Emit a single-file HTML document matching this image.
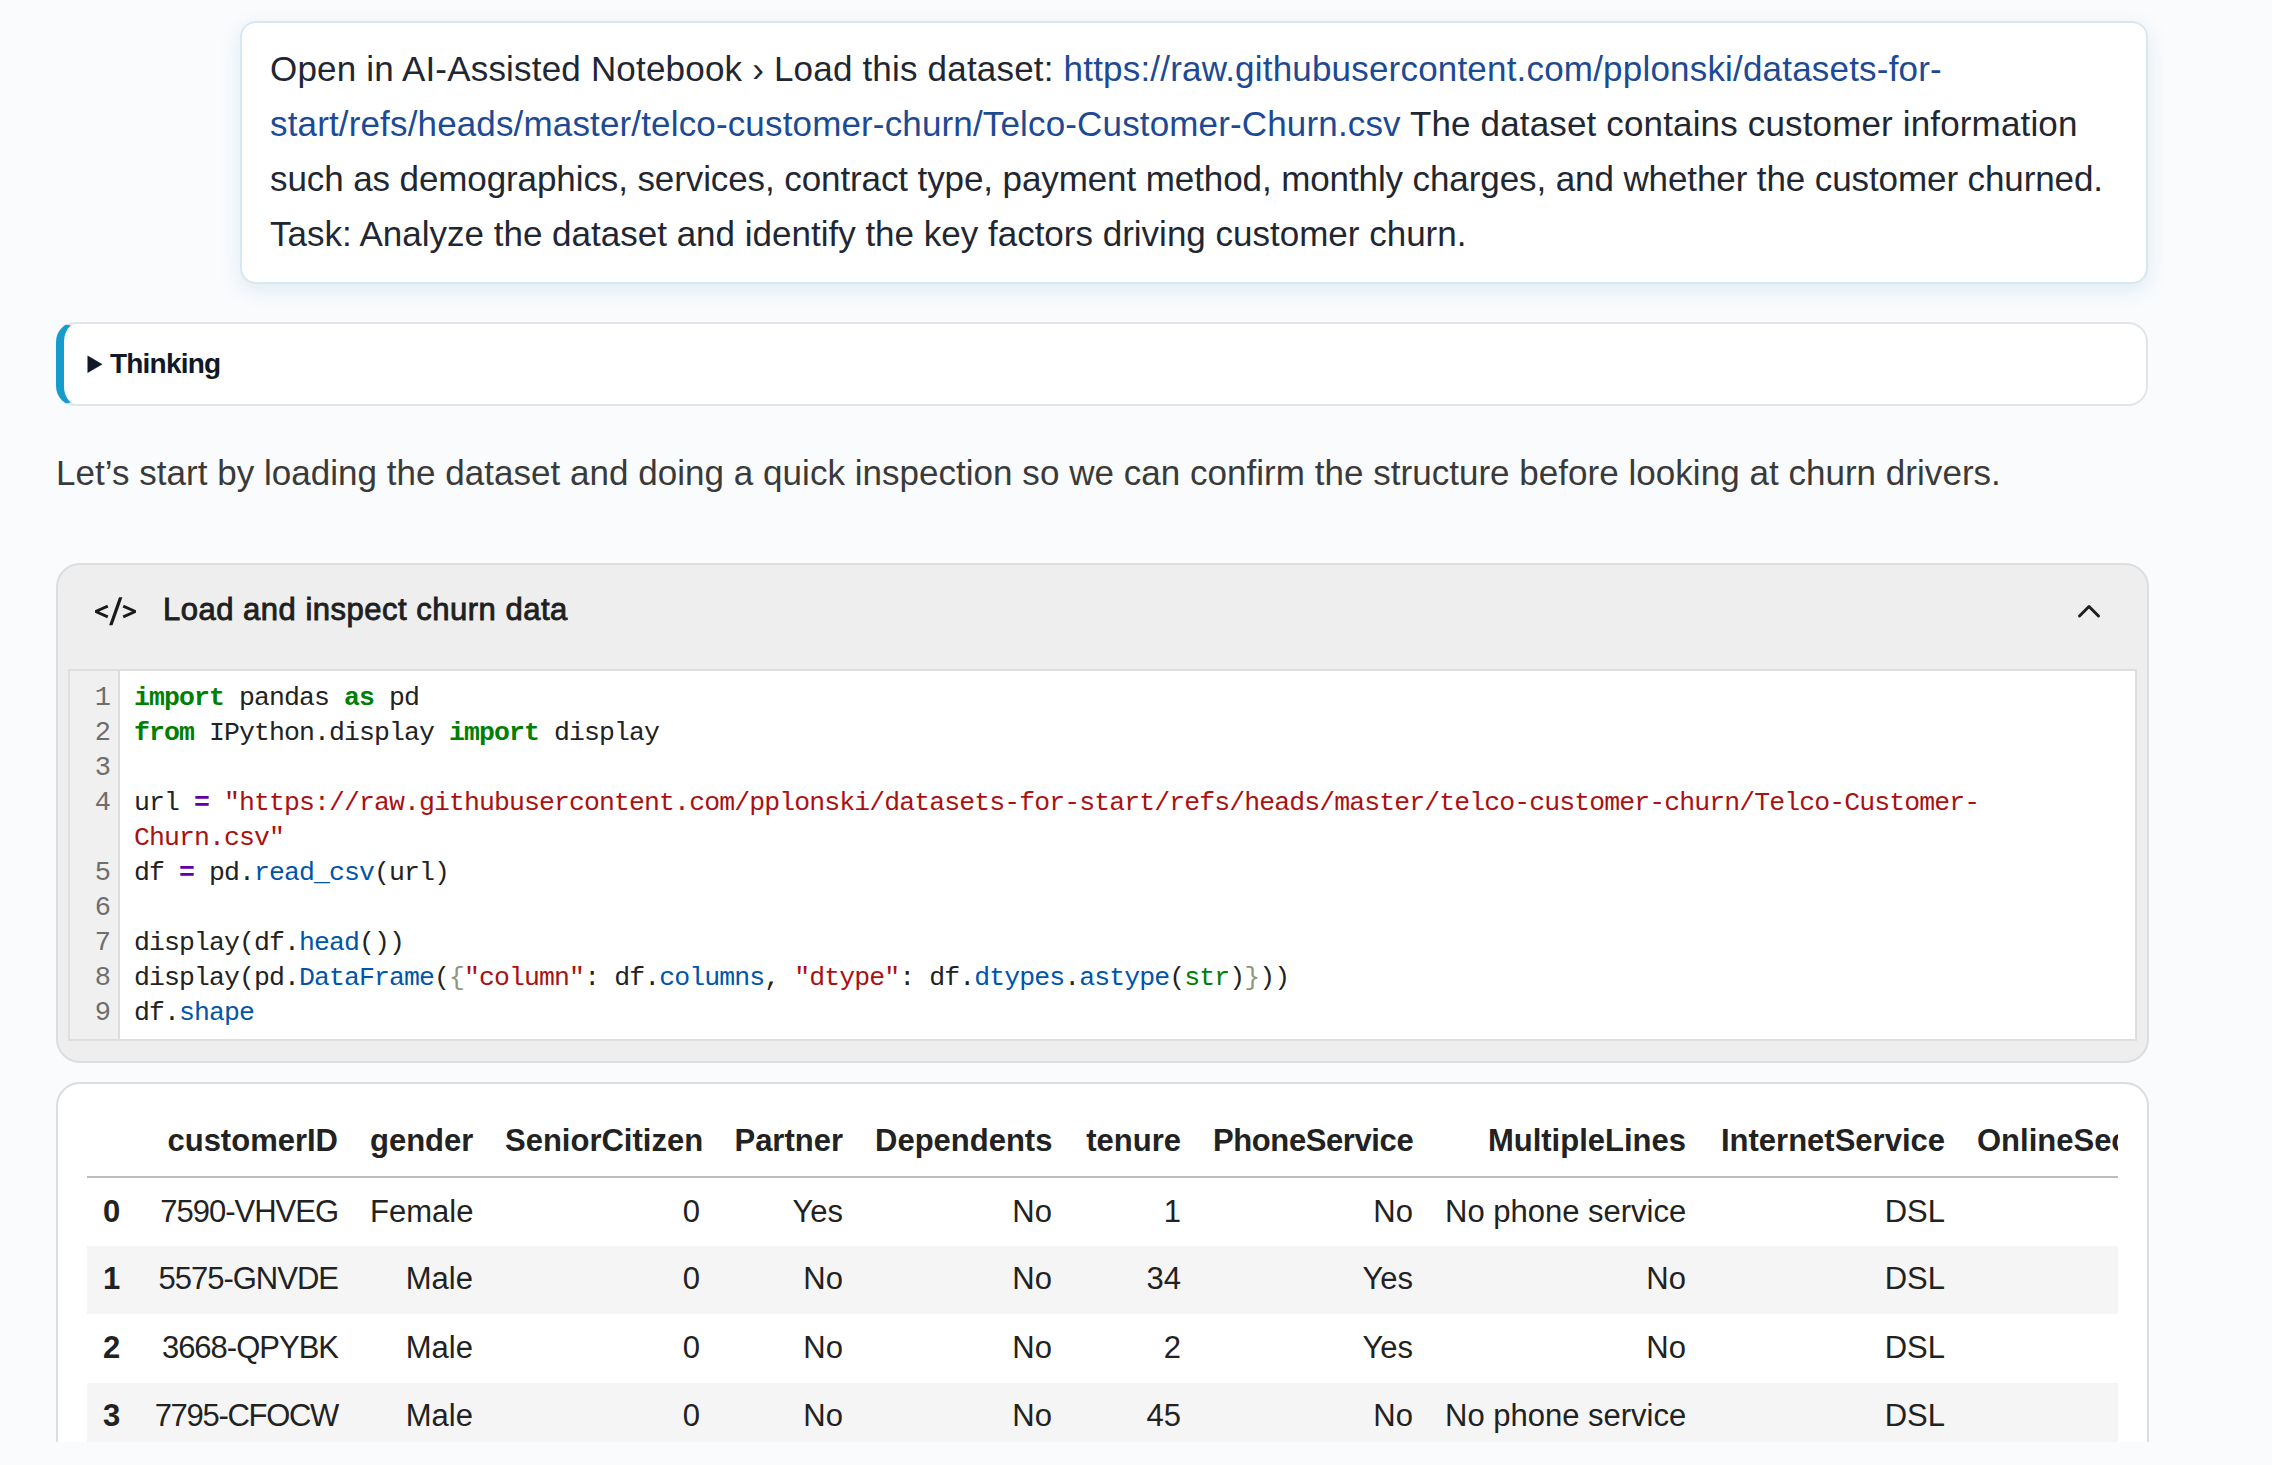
<!DOCTYPE html>
<html><head><meta charset="utf-8">
<style>
*{box-sizing:border-box;margin:0;padding:0}
html,body{width:2272px;height:1465px;overflow:hidden;background:#f9fbfd;font-family:"Liberation Sans",sans-serif;}
.abs{position:absolute}
.nw{white-space:nowrap}
#prompt{left:240px;top:21px;width:1908px;height:263px;background:#fff;border:2px solid #d8e8f2;border-radius:16px;box-shadow:0 6px 18px rgba(150,190,215,.25);}
.pl{position:absolute;left:28px;font-size:35px;line-height:55px;height:55px;color:#1f2733;white-space:nowrap}
.lk{color:#1d4a94}
#think{left:56px;top:322px;width:2092px;height:84px;background:#fff;border:2px solid #e2e4e8;border-left:8px solid #159ccc;border-radius:20px;}
#think .t{position:absolute;left:46px;top:0;font-size:28px;line-height:80px;font-weight:bold;letter-spacing:-0.8px;color:#111827;white-space:nowrap}
#para{left:56px;font-size:35px;line-height:55px;color:#3a3a3a;letter-spacing:0.03px;white-space:nowrap}
#cell{left:56px;top:563px;width:2093px;height:500px;background:#eeeeee;border:2px solid #dcdddf;border-radius:24px;}
#cell .ic{position:absolute;left:37px;top:28px;font-size:31px;color:#1f1f1f;white-space:nowrap}
#cell .ti{position:absolute;left:105px;top:27px;font-size:31px;letter-spacing:0.5px;-webkit-text-stroke:0.9px #1f1f1f;color:#1f1f1f;white-space:nowrap}
#code{left:68px;top:669px;width:2069px;height:372px;background:#fff;border:2px solid #dedede;}
#gut{position:absolute;left:0;top:0;width:50px;height:100%;background:#f0f0f0;border-right:2px solid #dedede}
.cl{position:absolute;left:64px;margin-top:-1px;font-family:"Liberation Mono",monospace;font-size:26.5px;letter-spacing:-0.9px;line-height:35px;height:35px;white-space:pre;color:#222}
.nm{position:absolute;left:0;width:41px;margin-top:-1px;text-align:right;font-family:"Liberation Mono",monospace;font-size:27px;line-height:35px;color:#6e6e6e}
.k{color:#008000;font-weight:bold}
.o{color:#6200a8;font-weight:bold}
.s{color:#aa1111}
.p{color:#0055aa}
.b{color:#008000}
.br{color:#8e9680}
#tcard{left:56px;top:1082px;width:2093px;height:500px;background:#fff;border:2px solid #dcdddf;border-radius:24px;overflow:hidden}
#twrap{position:absolute;left:29px;top:0;width:2031px;overflow:hidden}
table{border-collapse:collapse;table-layout:fixed;font-size:31px;color:#222}
td,th{text-align:right;white-space:nowrap;overflow:hidden;padding:0 16px}
thead th{height:93px;vertical-align:bottom;padding-bottom:17px;border-bottom:2px solid #bdbdbd;font-weight:bold}
tbody td,tbody th{height:68px;padding-bottom:2px}
tbody tr:nth-child(1) td,tbody tr:nth-child(1) th,tbody tr:nth-child(3) td,tbody tr:nth-child(3) th{height:69px}
tbody tr:nth-child(1) td,tbody tr:nth-child(1) th{padding-bottom:1px}
tbody th{font-weight:bold}
td.id{letter-spacing:-1px}
tbody tr:nth-child(even){background:#f5f5f5}
#clip{left:0;top:1442px;width:2272px;height:23px;background:#f9fbfd}
</style></head><body>
<div id="prompt" class="abs">
 <div class="pl" style="top:18px;letter-spacing:0.19px">Open in AI-Assisted Notebook › Load this dataset: <span class="lk">https://raw.githubusercontent.com/pplonski/datasets-for-</span></div>
 <div class="pl" style="top:73px;letter-spacing:0.15px"><span class="lk">start/refs/heads/master/telco-customer-churn/Telco-Customer-Churn.csv</span> The dataset contains customer information</div>
 <div class="pl" style="top:128px;letter-spacing:-0.1px">such as demographics, services, contract type, payment method, monthly charges, and whether the customer churned.</div>
 <div class="pl" style="top:183px">Task: Analyze the dataset and identify the key factors driving customer churn.</div>
</div>
<div id="think" class="abs"><svg class="abs" style="left:23px;top:31px" width="16" height="19" viewBox="0 0 16 19"><path d="M0.5 0.5 L15.5 9.25 L0.5 18 Z" fill="#111827"/></svg><div class="t">Thinking</div></div>
<div id="para" class="abs" style="top:445px">Let’s start by loading the dataset and doing a quick inspection so we can confirm the structure before looking at churn drivers.</div>
<div id="cell" class="abs">
 <svg class="abs" style="left:27px;top:25px" width="60" height="42" viewBox="0 0 60 42"><g fill="none" stroke="#1a1a1a" stroke-width="2.9" stroke-linejoin="bevel" stroke-linecap="butt"><path d="M22.8 16.2 L10.6 21.5 L22.8 26.8"/><path d="M38.2 16.2 L50.4 21.5 L38.2 26.8"/></g><path d="M34 7.2 L37.4 7.2 L27.5 35.3 L24.1 35.3 Z" fill="#1a1a1a"/></svg>
 <div class="ti">Load and inspect churn data</div>
 <svg class="abs" style="left:2016px;top:35px" width="30" height="24" viewBox="0 0 30 24"><path d="M5.5 16 L15 6.5 L24.5 16" fill="none" stroke="#1f1f1f" stroke-width="3" stroke-linecap="round" stroke-linejoin="round"/></svg>
</div>
<div id="code" class="abs">
 <div id="gut">
  <div class="nm" style="top:11px">1</div>
  <div class="nm" style="top:46px">2</div>
  <div class="nm" style="top:81px">3</div>
  <div class="nm" style="top:116px">4</div>
  <div class="nm" style="top:186px">5</div>
  <div class="nm" style="top:221px">6</div>
  <div class="nm" style="top:256px">7</div>
  <div class="nm" style="top:291px">8</div>
  <div class="nm" style="top:326px">9</div>
 </div>
 <div class="cl" style="top:11px"><span class="k">import</span> pandas <span class="k">as</span> pd</div>
 <div class="cl" style="top:46px"><span class="k">from</span> IPython.display <span class="k">import</span> display</div>
 <div class="cl" style="top:116px">url <span class="o">=</span> <span class="s">"https://raw.githubusercontent.com/pplonski/datasets-for-start/refs/heads/master/telco-customer-churn/Telco-Customer-</span></div>
 <div class="cl" style="top:151px"><span class="s">Churn.csv"</span></div>
 <div class="cl" style="top:186px">df <span class="o">=</span> pd.<span class="p">read_csv</span>(url)</div>
 <div class="cl" style="top:256px">display(df.<span class="p">head</span>())</div>
 <div class="cl" style="top:291px">display(pd.<span class="p">DataFrame</span>(<span class="br">{</span><span class="s">"column"</span>: df.<span class="p">columns</span>, <span class="s">"dtype"</span>: df.<span class="p">dtypes</span>.<span class="p">astype</span>(<span class="b">str</span>)<span class="br">}</span>))</div>
 <div class="cl" style="top:326px">df.<span class="p">shape</span></div>
</div>
<div id="tcard" class="abs">
 <div id="twrap">
 <table style="width:2105px">
  <colgroup><col style="width:49px"><col style="width:218px"><col style="width:135px"><col style="width:227px"><col style="width:143px"><col style="width:209px"><col style="width:129px"><col style="width:232px"><col style="width:273px"><col style="width:259px"><col style="width:231px"></colgroup>
  <thead><tr><th></th><th>customerID</th><th>gender</th><th>SeniorCitizen</th><th>Partner</th><th>Dependents</th><th>tenure</th><th style="letter-spacing:-0.4px">PhoneService</th><th>MultipleLines</th><th>InternetService</th><th style="text-align:left">OnlineSecurity</th></tr></thead>
  <tbody>
   <tr><th>0</th><td class="id">7590-VHVEG</td><td>Female</td><td>0</td><td>Yes</td><td>No</td><td>1</td><td>No</td><td>No phone service</td><td>DSL</td><td></td></tr>
   <tr><th>1</th><td class="id">5575-GNVDE</td><td>Male</td><td>0</td><td>No</td><td>No</td><td>34</td><td>Yes</td><td>No</td><td>DSL</td><td></td></tr>
   <tr><th>2</th><td class="id">3668-QPYBK</td><td>Male</td><td>0</td><td>No</td><td>No</td><td>2</td><td>Yes</td><td>No</td><td>DSL</td><td></td></tr>
   <tr><th>3</th><td class="id" style="letter-spacing:-1.3px">7795-CFOCW</td><td>Male</td><td>0</td><td>No</td><td>No</td><td>45</td><td>No</td><td>No phone service</td><td>DSL</td><td></td></tr>
  </tbody>
 </table>
 </div>
</div>
<div id="clip" class="abs"></div>
</body></html>
